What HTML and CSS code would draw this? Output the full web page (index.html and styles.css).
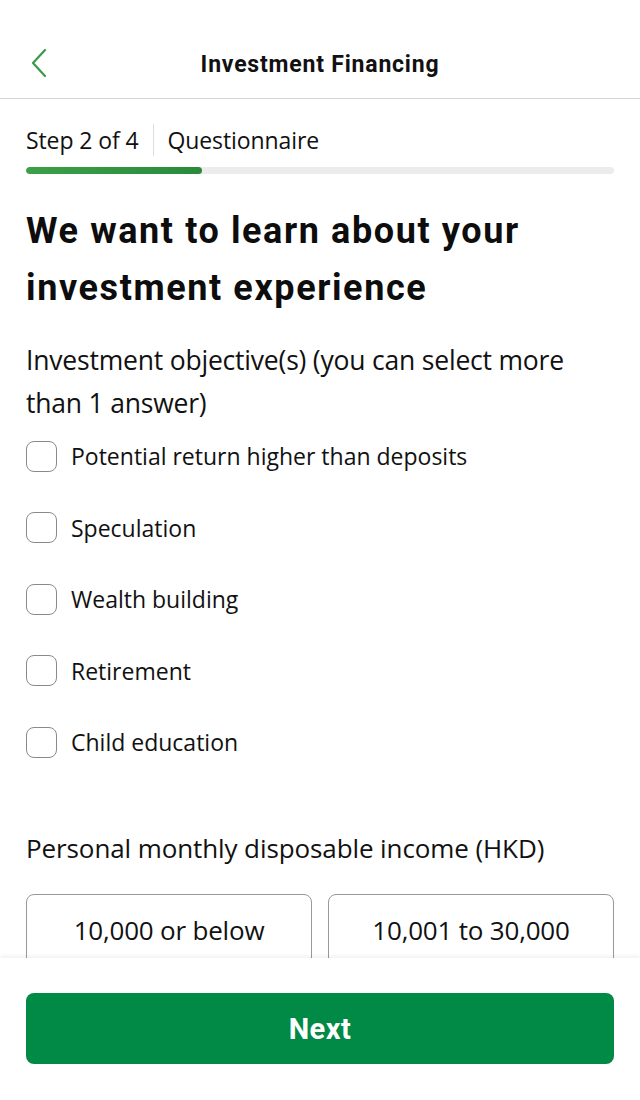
FILE: index.html
```html
<!DOCTYPE html>
<html lang="en">
<head>
    <meta charset="UTF-8">
    <meta name="viewport" content="width=device-width, initial-scale=1.0">
    <title>Investment Financing</title>
    <link rel="stylesheet" href="styles.css">
</head>
<body>
    <header class="topbar">
        <button class="back" aria-label="Back">
            <svg width="18" height="30" viewBox="0 0 18 30"><path d="M15 2 L3 15 L15 28" fill="none" stroke="#3a9a48" stroke-width="2.2" stroke-linecap="round" stroke-linejoin="round"/></svg>
        </button>
        <h1 class="topbar-title">Investment Financing</h1>
    </header>

    <main class="content">
        <div class="step">
            <span class="step-count">Step 2 of 4</span>
            <span class="step-name">Questionnaire</span>
        </div>
        <div class="progress"><div class="progress-fill" style="width: 30%"></div></div>

        <h2 class="heading">We want to learn about your investment experience</h2>

        <p class="question">Investment objective(s) (you can select more than 1 answer)</p>
        <div class="options">
            <label class="check"><input type="checkbox"><span class="box"></span>Potential return higher than deposits</label>
            <label class="check"><input type="checkbox"><span class="box"></span>Speculation</label>
            <label class="check"><input type="checkbox"><span class="box"></span>Wealth building</label>
            <label class="check"><input type="checkbox"><span class="box"></span>Retirement</label>
            <label class="check"><input type="checkbox"><span class="box"></span>Child education</label>
        </div>

        <p class="question income">Personal monthly disposable income (HKD)</p>
        <div class="choices">
            <button class="choice">10,000 or below</button>
            <button class="choice">10,001 to 30,000</button>
        </div>
    </main>

    <footer class="footer">
        <button class="next">Next</button>
    </footer>
</body>
</html>
```

FILE: styles.css
```css
body {
    margin: 0;
    background: #fff;
    color: #111;
    font-family: "Open Sans", "Noto Sans", sans-serif;
    overflow: hidden;
}

.topbar {
    position: relative;
    height: 98px;
    display: flex;
    align-items: flex-end;
    justify-content: center;
    border-bottom: 1.5px solid #d4d4d4;
}

.back {
    position: absolute;
    left: 30px;
    top: 48px;
    padding: 0;
    border: none;
    background: none;
    cursor: pointer;
}

.topbar-title {
    margin: 0 0 20px;
    font-family: Roboto, "Liberation Sans", sans-serif;
    font-size: 23px;
    font-weight: 700;
    letter-spacing: 0.8px;
    color: #111;
}

.content {
    padding: 22px 26px 0;
}

.step {
    display: flex;
    align-items: center;
    font-size: 23px;
    letter-spacing: -0.1px;
    height: 38px;
}

.step-count {
    padding-right: 14px;
    border-right: 1px solid #ddd;
    line-height: 32px;
}

.step-name {
    padding-left: 14px;
}

.progress {
    margin-top: 8px;
    height: 7px;
    border-radius: 4px;
    background: #ececec;
    overflow: hidden;
}

.progress-fill {
    height: 100%;
    border-radius: 4px;
    background: linear-gradient(90deg, #3ba047, #2a8a3c);
}

.heading {
    margin: 29px 0 0;
    font-family: Roboto, "Liberation Sans", sans-serif;
    font-size: 36px;
    line-height: 57px;
    font-weight: 700;
    letter-spacing: 1.6px;
    color: #0d0d0d;
}

.question {
    margin: 22px 0 0;
    font-size: 26.5px;
    line-height: 43px;
    letter-spacing: -0.2px;
}

.options {
    display: flex;
    flex-direction: column;
    gap: 39.5px;
    margin-top: 15px;
}

.check {
    display: flex;
    align-items: center;
    gap: 14px;
    font-size: 23px;
    height: 32px;
    cursor: pointer;
}

.check input {
    display: none;
}

.box {
    width: 29px;
    height: 29px;
    border: 1.5px solid #8a8a8a;
    border-radius: 8px;
    flex: none;
}

.income {
    margin-top: 69px;
    font-size: 26px;
    letter-spacing: -0.1px;
}

.choices {
    display: grid;
    grid-template-columns: 1fr 1fr;
    gap: 16px;
    margin-top: 24px;
}

.choice {
    height: 76px;
    border: 1.5px solid #999;
    border-radius: 8px;
    background: #fff;
    font-family: "Open Sans", "Noto Sans", sans-serif;
    font-size: 26px;
    letter-spacing: -0.2px;
    color: #111;
    padding: 0 0 4px;
    cursor: pointer;
}

.footer {
    position: fixed;
    left: 0;
    right: 0;
    bottom: 0;
    height: 142px;
    background: #fff;
    box-shadow: 0 -2px 4px rgba(0, 0, 0, 0.06);
    padding: 35px 26px 0;
    box-sizing: border-box;
}

.next {
    width: 100%;
    height: 71px;
    border: none;
    border-radius: 8px;
    background: #008a45;
    color: #fff;
    font-family: Roboto, "Liberation Sans", sans-serif;
    font-size: 29px;
    font-weight: 700;
    letter-spacing: 0.5px;
    cursor: pointer;
}
```
